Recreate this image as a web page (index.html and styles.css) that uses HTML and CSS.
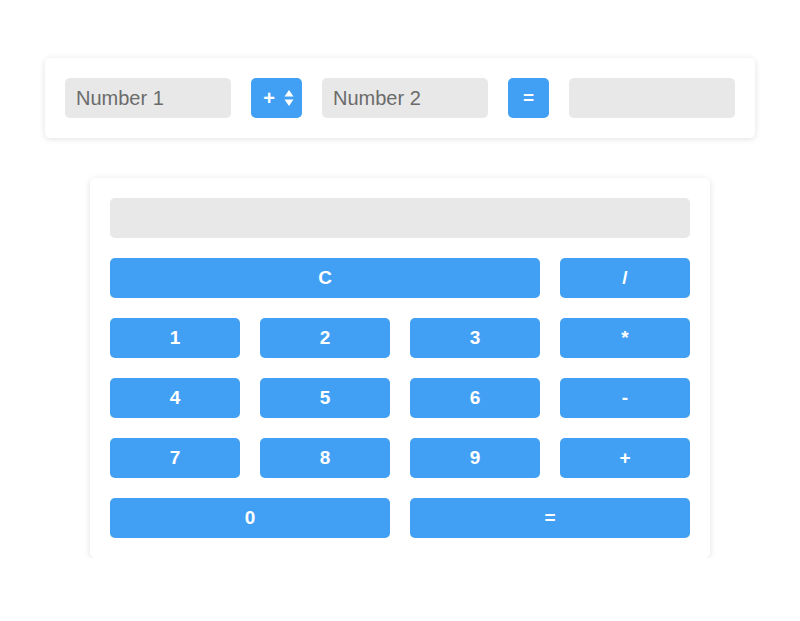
FILE: index.html
```html
<!DOCTYPE html>
<html>
<head>
<meta charset="utf-8">
<link rel="stylesheet" href="styles.css">
</head>
<body>
<div class="page">
  <div class="card top">
    <div class="field"><span class="ph">Number 1</span></div>
    <div class="btn select"><span class="op">+</span>
      <svg class="arrows" width="10" height="18" viewBox="0 0 10 18"><path d="M5 1 L9.5 7.5 H0.5 Z M5 17 L9.5 10.5 H0.5 Z" fill="#fff"/></svg>
    </div>
    <div class="field"><span class="ph">Number 2</span></div>
    <div class="btn eq">=</div>
    <div class="field"></div>
  </div>
  <div class="card calc">
    <div class="display"></div>
    <div class="keys">
      <div class="btn span3">C</div>
      <div class="btn">/</div>
      <div class="btn">1</div>
      <div class="btn">2</div>
      <div class="btn">3</div>
      <div class="btn">*</div>
      <div class="btn">4</div>
      <div class="btn">5</div>
      <div class="btn">6</div>
      <div class="btn">-</div>
      <div class="btn">7</div>
      <div class="btn">8</div>
      <div class="btn">9</div>
      <div class="btn">+</div>
      <div class="btn span2">0</div>
      <div class="btn span2">=</div>
    </div>
  </div>
</div>
</body>
</html>
```
FILE: styles.css
```css
* { box-sizing: border-box; }
body {
  margin: 0;
  background: #fff;
  font-family: "Liberation Sans", Arial, sans-serif;
}
.page {
  display: flex;
  flex-direction: column;
  align-items: center;
  padding-top: 58px;
  gap: 40px;
}
.card {
  background: #fff;
  border-radius: 5px;
  box-shadow: 0 1px 6px rgba(0,0,0,0.12);
  padding: 20px;
}
.top {
  width: 710px;
  display: flex;
  gap: 20px;
}
.field {
  width: 166px;
  height: 40px;
  background: #e8e8e8;
  border-radius: 5px;
  display: flex;
  align-items: center;
  padding-left: 11px;
}
.ph {
  color: #6b6b6b;
  font-size: 20px;
}
.btn {
  background: #42a0f4;
  color: #fff;
  border-radius: 5px;
  height: 40px;
  display: flex;
  align-items: center;
  justify-content: center;
  font-weight: bold;
  font-size: 19px;
}
.select {
  width: 51px;
  gap: 9px;
  padding-left: 4px;
}
.select .op { font-size: 20px; }
.eq { width: 41px; }
.calc { width: 620px; }
.display {
  height: 40px;
  background: #e8e8e8;
  border-radius: 5px;
  margin-bottom: 20px;
}
.keys {
  display: grid;
  grid-template-columns: repeat(4, 1fr);
  gap: 20px;
}
.span3 { grid-column: span 3; }
.span2 { grid-column: span 2; }
```
